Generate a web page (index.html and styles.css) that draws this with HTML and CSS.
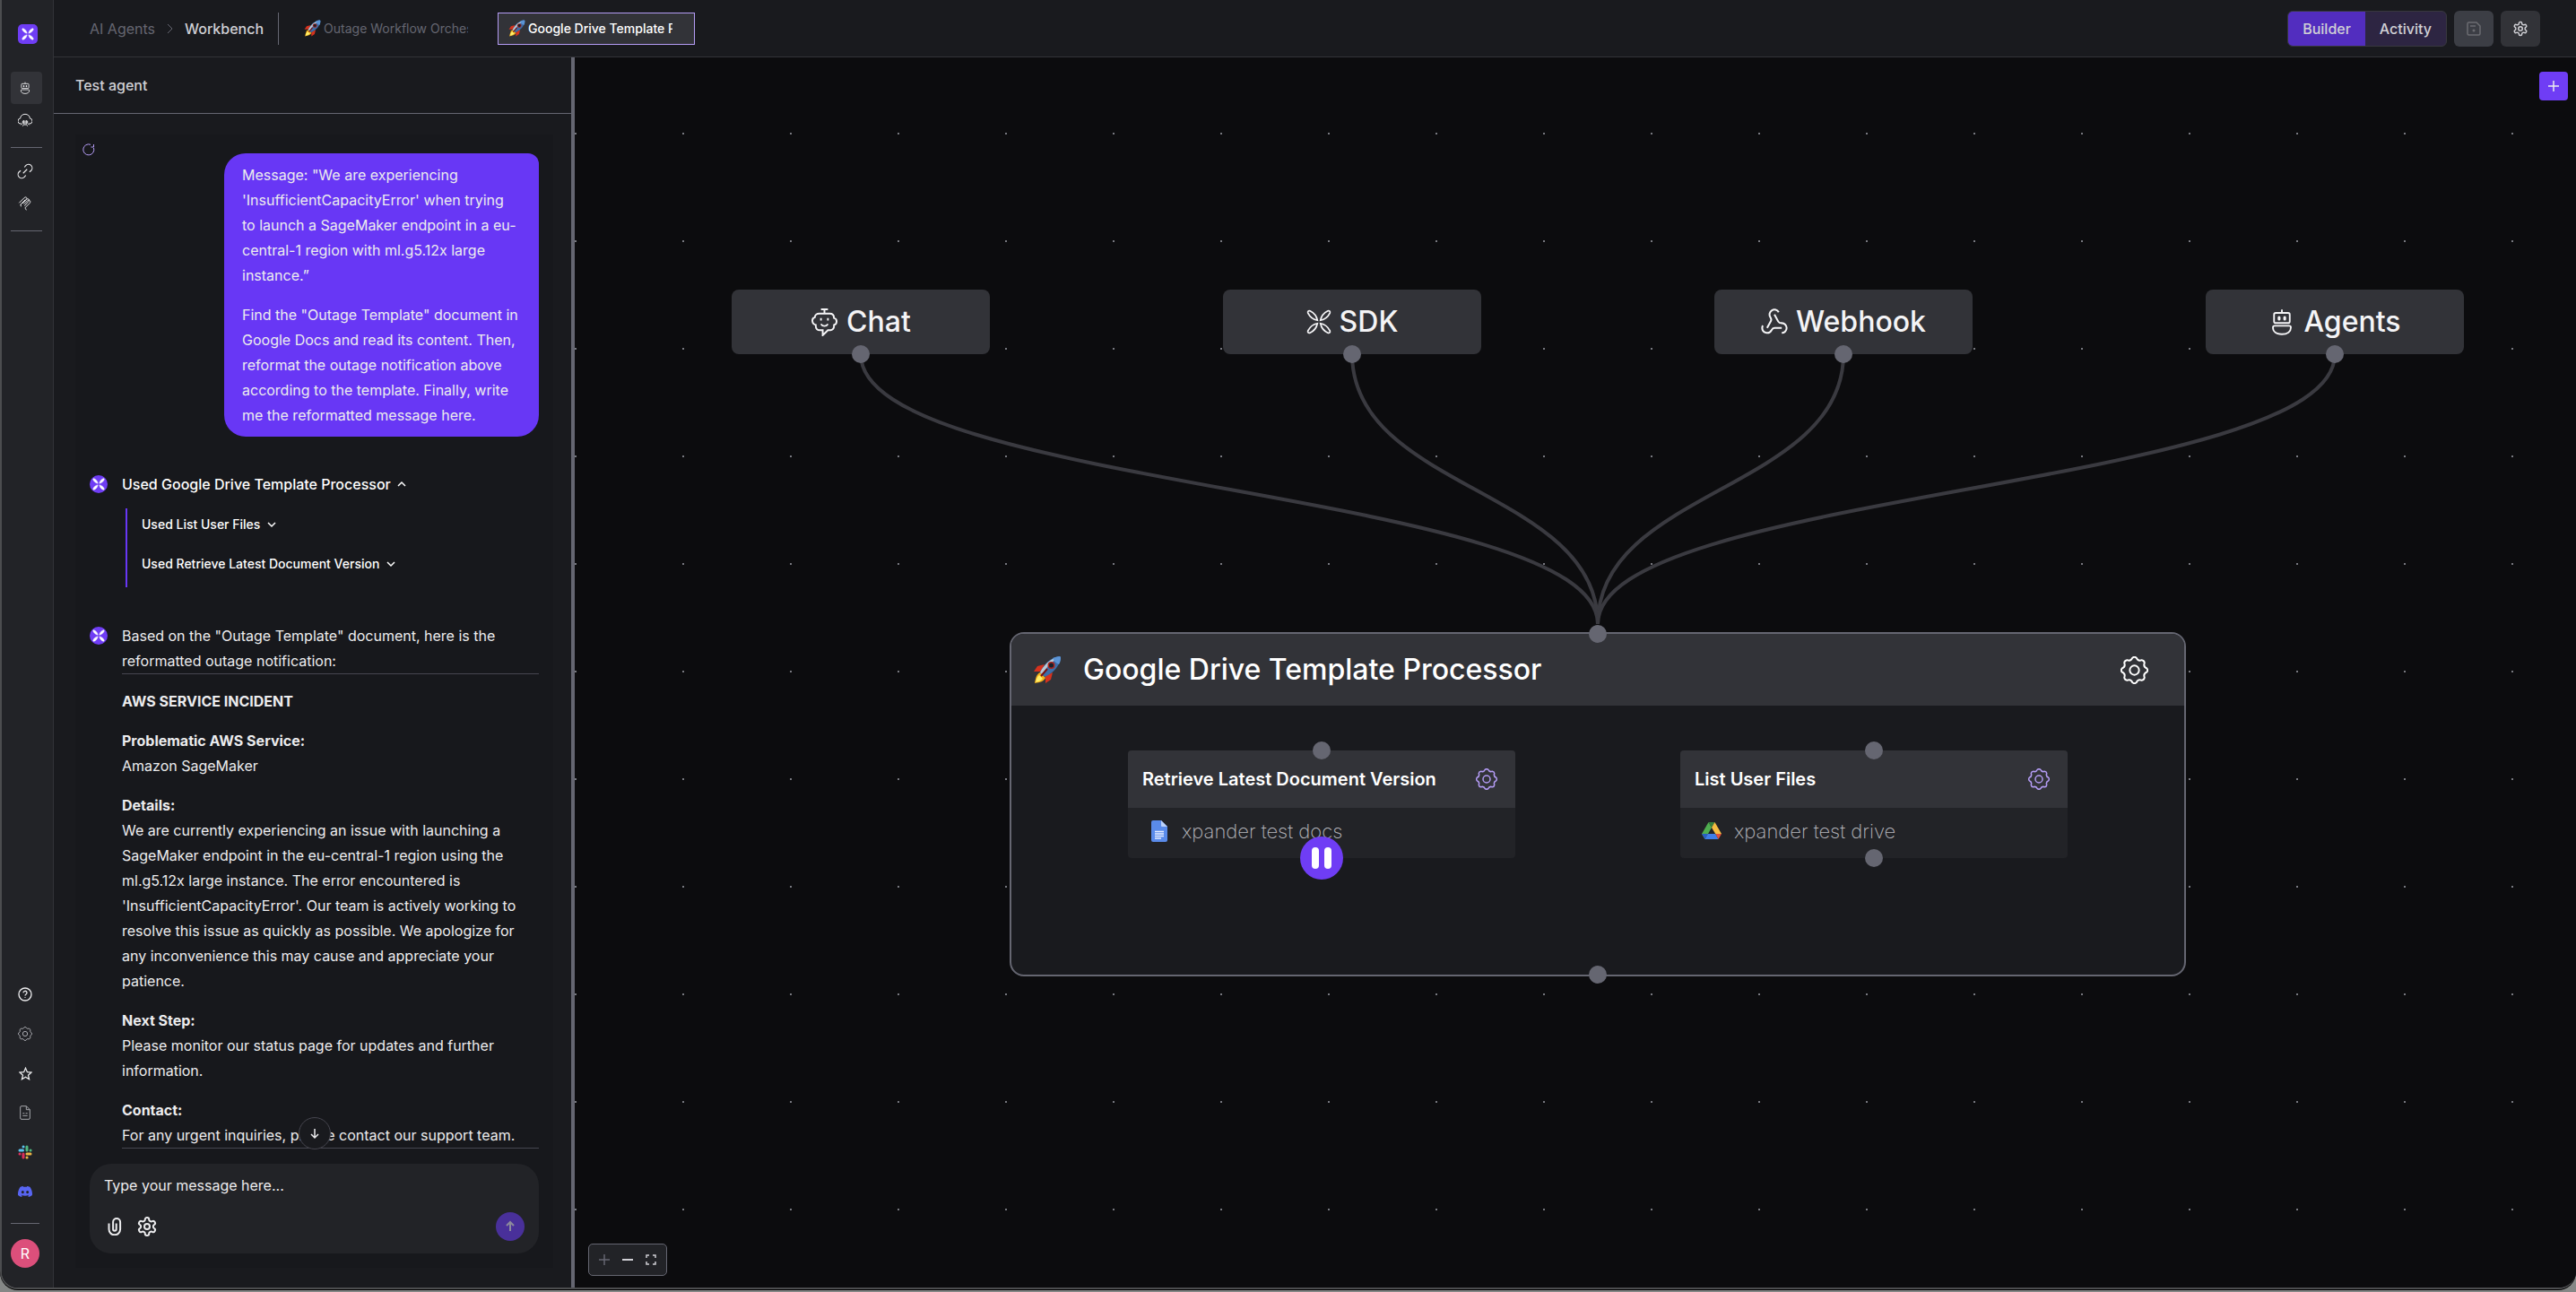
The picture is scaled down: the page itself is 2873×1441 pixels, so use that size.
FILE: index.html
```html
<!DOCTYPE html>
<html lang="en">
<head>
<meta charset="utf-8">
<title>Workbench</title>
<link rel="stylesheet" href="styles.css">
</head>
<body>
<svg class="sprite" aria-hidden="true">
  <symbol id="cog8" viewBox="0 0 24 24"><path d="M10.33 1.33Q12 0 13.69 1.33Q15.06 4.6 18.35 3.26Q20.5 3.5 20.74 5.65Q19.4 8.94 22.67 10.31Q24 12 22.67 13.69Q19.4 15.06 20.74 18.35Q20.5 20.5 18.35 20.74Q15.06 19.4 13.69 22.67Q12 24 10.31 22.67Q8.94 19.4 5.65 20.74Q3.5 20.5 3.26 18.35Q4.6 15.06 1.33 13.69Q0 12 1.33 10.31Q4.6 8.94 3.26 5.65Q3.5 3.5 5.65 3.26Q8.94 4.6 10.33 1.33Z"/><circle cx="12" cy="12" r="4"/></symbol>
  <symbol id="cog6" viewBox="0 0 24 24"><path d="M12.22 2h-.44a2 2 0 0 0-2 2v.18a2 2 0 0 1-1 1.73l-.43.25a2 2 0 0 1-2 0l-.15-.08a2 2 0 0 0-2.73.73l-.22.38a2 2 0 0 0 .73 2.73l.15.1a2 2 0 0 1 1 1.72v.51a2 2 0 0 1-1 1.74l-.15.09a2 2 0 0 0-.73 2.73l.22.38a2 2 0 0 0 2.73.73l.15-.08a2 2 0 0 1 2 0l.43.25a2 2 0 0 1 1 1.73V20a2 2 0 0 0 2 2h.44a2 2 0 0 0 2-2v-.18a2 2 0 0 1 1-1.73l.43-.25a2 2 0 0 1 2 0l.15.08a2 2 0 0 0 2.73-.73l.22-.39a2 2 0 0 0-.73-2.73l-.15-.08a2 2 0 0 1-1-1.74v-.5a2 2 0 0 1 1-1.74l.15-.09a2 2 0 0 0 .73-2.73l-.22-.38a2 2 0 0 0-2.73-.73l-.15.08a2 2 0 0 1-2 0l-.43-.25a2 2 0 0 1-1-1.73V4a2 2 0 0 0-2-2z"/><circle cx="12" cy="12" r="3"/></symbol>
  <symbol id="robot" viewBox="0 0 24 24"><path d="M12 1v3M6.500 4h11a1.500 1.500 0 0 1 1.500 1.500v6a1.500 1.500 0 0 1-1.500 1.500h-11a1.500 1.500 0 0 1-1.500-1.500v-6a1.500 1.500 0 0 1 1.500-1.500zM5.500 15.500h13a1.500 1.500 0 0 1 1.500 1.500c0 3.500-3 6-8 6s-8-2.500-8-6a1.500 1.500 0 0 1 1.500-1.500z"/><path d="M9.500 8v1.500M14.500 8v1.500" stroke-width="2.500" stroke-linecap="round"/></symbol>
  <symbol id="wing" viewBox="0 0 24 24"><path d="M1.500 3.500c-.5-1.500.5-2.500 2-2 3 1.500 6 3.500 7 9-5-1-7.500-4-9-7zM22.500 3.500c.5-1.500-.5-2.500-2-2-3 1.500-6 3.500-7 9 5-1 7.500-4 9-7zM1.500 20.500c-.5 1.500.5 2.500 2 2 3-1.500 6-3.500 7-9-5 1-7.500 4-9 7zM22.500 20.500c.5 1.500-.5 2.500-2 2-3-1.500-6-3.500-7-9 5 1 7.500 4 9 7z"/></symbol>
  <symbol id="rocket" viewBox="0 0 32 32"><path d="M13 10 5 12 1 18l8 0zM22 19l-2 8-6 4 0-8z" fill="#d5321e"/><path d="M8 19c-4 2-5 6-6 12 6-1 10-2 12-6z" fill="#f6b21b"/><path d="M7 22c-3 3-3 5-4 8 4-1 6-2 8-4z" fill="#fff06a"/><path d="M30 1C21 2 13 8 8 19l5 5C24 19 30 11 31 2z" fill="#3d6ea8"/><path d="M27 2C19 4 12 11 8 19l3 3C14 14 20 7 29 3z" fill="#b9cad6"/><path d="M30 1c-3 0-5 1-8 2 1 3 3 5 7 7 2-3 2-6 2-8z" fill="#5b94d6"/><circle cx="20.500" cy="11" r="4" fill="#a9241d"/><circle cx="20.500" cy="11" r="2.500" fill="#16202c"/><path d="M9 23l7-8" stroke="#711" stroke-width="2"/></symbol>
  <symbol id="up" viewBox="0 0 12 12"><path d="M2 8l4-4 4 4"/></symbol>
  <symbol id="down" viewBox="0 0 12 12"><path d="M2 4l4 4 4-4"/></symbol>
</svg>

<div class="window">
  <nav class="rail" aria-label="Main">
    <a class="logo" href="#" aria-label="Home"><svg class="solid" width="14" height="14"><use href="#wing"/></svg></a>
    <a class="rail-item active" href="#" aria-label="Agents"><svg class="icon" width="14" height="14"><use href="#robot"/></svg></a>
    <a class="rail-item" href="#" aria-label="Cloud"><svg class="icon" width="16" height="16" viewBox="0 0 24 24"><path d="M6 18H5a4.500 4.500 0 0 1-1-9c0-4 3.500-7 8-7s8 3 8 7a4.500 4.500 0 0 1-1 9h-1M10 12v7l-2 3M14 12v7l2 3M12 13v8M8 13v4l-3 3M16 13v4l3 3"/></svg></a>
    <hr class="rail-line">
    <a class="rail-item" href="#" aria-label="Connections"><svg class="icon" width="18" height="18" viewBox="0 0 24 24"><path d="M9 15l6-6M11 6l2-2.500a5.300 5.300 0 0 1 8 7.500L18.500 13M13 18l-2 2.500A5.300 5.300 0 0 1 3 13l2.500-2"/></svg></a>
    <a class="rail-item" href="#" aria-label="Toolkits"><svg class="icon" width="16" height="16" viewBox="0 0 24 24"><path d="M2 11l9-9c3-2 5 1 3 3l-7 7M7 12l7-7c3-2 6 0 4 3l-7 8M10 13l6-6c3-2 6 1 4 4l-7 7c-2 2 0 2 1 5M4 14l8-8M6 17c-2-1-2-3 0-4"/></svg></a>
    <hr class="rail-line">
    <div class="rail-foot">
      <a class="rail-link" href="#" aria-label="Help"><svg class="icon" width="16" height="16" viewBox="0 0 24 24"><circle cx="12" cy="12" r="10.500" stroke-width="2"/><path d="M9 9.500a3 3 0 1 1 4.500 2.500c-1 .6-1.500 1-1.500 2.200M12 17v1" stroke-width="2"/></svg></a>
      <a class="rail-link dim" href="#" aria-label="Settings"><svg class="icon" width="16" height="16"><use href="#cog8"/></svg></a>
      <a class="rail-link" href="#" aria-label="Favorites"><svg class="icon" width="15" height="15" viewBox="0 0 24 24"><path d="M12 2l3 7 7.500.7-5.700 5 1.700 7.300L12 18l-6.500 4 1.700-7.300-5.700-5L9 9z" stroke-width="2"/></svg></a>
      <a class="rail-link dim" href="#" aria-label="Documents"><svg class="icon" width="16" height="16" viewBox="0 0 24 24"><path d="M4 3a2 2 0 0 1 2-2h8l6 6v14a2 2 0 0 1-2 2H6a2 2 0 0 1-2-2zM14 1v6h6M8 13h3M13 13h3M8 17h8"/></svg></a>
      <a class="rail-link" href="#" aria-label="Slack"><svg width="16" height="16" viewBox="0 0 16 16"><g stroke-width="3" stroke-linecap="round"><path d="M2 6h3.500M6 2h.1" stroke="#5cc3ee"/><path d="M10 2v4M14 6h.1" stroke="#4fb67f"/><path d="M14 10h-4M10 14h.1" stroke="#ebb445"/><path d="M6 14v-4M2 10h.1" stroke="#dc2f5c"/></g></svg></a>
      <a class="rail-link" href="#" aria-label="Discord"><svg width="16" height="16" viewBox="0 0 24 24"><path fill="#5865f2" fill-rule="evenodd" d="M20.300 4.400A19.800 19.800 0 0 0 15.400 3l-.6 1.200a18 18 0 0 0-5.600 0L8.600 3a19.800 19.800 0 0 0-4.900 1.400C.6 9-.3 13.600.1 18.100A20 20 0 0 0 6.100 21l1.200-2-1.900-.9.4-.3c4 1.800 8.300 1.800 12.300 0l.4.300-1.800.9 1.200 2a20 20 0 0 0 6-3c.5-5.200-.8-9.700-3.600-13.600zM8 15.400c-1.200 0-2.200-1.100-2.200-2.500S6.800 10.400 8 10.400s2.200 1.100 2.200 2.500S9.200 15.400 8 15.400zm8 0c-1.200 0-2.200-1.100-2.200-2.500s1-2.500 2.200-2.500 2.200 1.100 2.200 2.500-1 2.500-2.200 2.500z"/></svg></a>
      <hr class="rail-line">
      <a class="avatar" href="#">R</a>
    </div>
  </nav>

  <div class="main">
    <header class="topbar">
      <div class="crumbs">
        <a class="crumb" href="#">AI Agents</a>
        <svg class="icon crumb-sep" width="7" height="12" viewBox="0 0 7 12"><path d="M1 1l5 5-5 5" stroke-width="1"/></svg>
        <a class="crumb here" href="#">Workbench</a>
      </div>
      <div class="tabs">
        <button class="tab"><svg class="tab-rocket" width="19" height="19"><use href="#rocket"/></svg><span>Outage Workflow Orchestrator</span></button>
        <button class="tab selected"><svg class="tab-rocket" width="19" height="19"><use href="#rocket"/></svg><span>Google Drive Template Processor</span></button>
      </div>
      <div class="actions">
        <div class="toggle"><button class="on">Builder</button><button>Activity</button></div>
        <button class="square muted" aria-label="Save"><svg class="icon" width="16" height="16" viewBox="0 0 16 16"><path d="M2.500 1h8.500l4 4v8.500a1.500 1.500 0 0 1-1.500 1.500h-11A1.500 1.500 0 0 1 1 13.500v-11A1.500 1.500 0 0 1 2.500 1zM4 5h6" stroke-width="1.500"/><circle cx="8" cy="10" r="1.500" fill="currentColor" stroke="none"/></svg></button>
        <button class="square" aria-label="Settings"><svg class="icon" width="18" height="18"><use href="#cog6" stroke-width="2"/></svg></button>
      </div>
    </header>

    <div class="work">
      <section class="panel">
        <h2 class="panel-title">Test agent</h2>
        <div class="panel-body">
          <div class="chat">
            <div class="log">
              <div class="user-row">
                <button class="refresh" aria-label="Restart"><svg class="icon" width="14" height="14" viewBox="0 0 14 14"><path d="M12.500 5A6 6 0 1 1 9 1.300M9.500 4h3V1" stroke-width="1"/></svg></button>
                <div class="bubble">
                  <p>Message: "We are experiencing 'InsufficientCapacityError' when trying to launch a SageMaker endpoint in a eu-central-1 region with ml.g5.12x large instance.”</p>
                  <p>Find the "Outage Template" document in Google Docs and read its content. Then, reformat the outage notification above according to the template. Finally, write me the reformatted message here.</p>
                </div>
              </div>
              <div class="reply">
                <span class="bot"><svg class="solid" width="14" height="14"><use href="#wing"/></svg></span>
                <div class="reply-body">
                  <button class="used">Used Google Drive Template Processor<svg class="icon" width="12" height="12"><use href="#up"/></svg></button>
                  <div class="steps">
                    <button class="step">Used List User Files<svg class="icon" width="12" height="12"><use href="#down"/></svg></button>
                    <button class="step">Used Retrieve Latest Document Version<svg class="icon" width="12" height="12"><use href="#down"/></svg></button>
                  </div>
                </div>
              </div>
              <div class="reply">
                <span class="bot"><svg class="solid" width="14" height="14"><use href="#wing"/></svg></span>
                <div class="reply-body">
                  <p>Based on the "Outage Template" document, here is the reformatted outage notification:</p>
                  <hr>
                  <div class="notice">
                    <p><strong>AWS SERVICE INCIDENT</strong></p>
                    <p><strong>Problematic AWS Service:</strong><br>Amazon SageMaker</p>
                    <p><strong>Details:</strong><br>We are currently experiencing an issue with launching a SageMaker endpoint in the eu-central-1 region using the ml.g5.12x large instance. The error encountered is 'InsufficientCapacityError'. Our team is actively working to resolve this issue as quickly as possible. We apologize for any inconvenience this may cause and appreciate your patience.</p>
                    <p><strong>Next Step:</strong><br>Please monitor our status page for updates and further information.</p>
                    <p><strong>Contact:</strong><br>For any urgent inquiries, please contact our support team.</p>
                  </div>
                  <hr>
                </div>
              </div>
            </div>
            <form class="composer">
              <button type="button" class="to-end" aria-label="Scroll to end"><svg class="icon" width="14" height="14" viewBox="0 0 14 14"><path d="M7 2v10M3 8l4 4 4-4"/></svg></button>
              <textarea rows="1" aria-label="Message" placeholder="Type your message here..."></textarea>
              <div class="composer-tools">
                <button type="button" aria-label="Attach"><svg class="icon" width="20" height="20" viewBox="0 0 20 20"><path d="M3.500 6.500V13a6.300 6.300 0 0 0 12.600 0V5a4 4 0 0 0-8 0v8a1.800 1.800 0 0 0 3.600 0V6.500" stroke-width="2"/></svg></button>
                <button type="button" aria-label="Options"><svg class="icon" width="24" height="24"><use href="#cog6" stroke-width="2"/></svg></button>
                <button type="submit" class="send" aria-label="Send"><svg class="icon" width="16" height="16" viewBox="0 0 16 16"><path d="M8 13V3M4 7l4-4 4 4" stroke-width="2"/></svg></button>
              </div>
            </form>
          </div>
        </div>
      </section>

      <section class="canvas" aria-label="Workflow">
        <svg class="edges" aria-hidden="true">
          <path d="M319 331C319 482 1141 482 1141 632"/>
          <path d="M867 331C867 482 1141 482 1141 632"/>
          <path d="M1415 331C1415 482 1141 482 1141 632"/>
          <path d="M1963 331C1963 482 1141 482 1141 632"/>
        </svg>
        <div class="node source chat-node">
          <svg class="icon" width="31" height="31" viewBox="0 0 32 32"><path d="M16 1v5M12 1h8M10 6h12c3 0 5 2 5 5 4 1 4 7 0 8v2c0 2-2 4-4 4h-3l-6 6v-6h-3c-3 0-5-2-5-5v-1c-5-1-5-8-1-9 0-2 2-4 5-4zM12 11v3M20 11v3M12 18c1.500 3 6.500 3 8 0" stroke-width="2"/></svg>
          <span>Chat</span>
          <i class="port bottom"></i>
        </div>
        <div class="node source sdk-node">
          <svg class="icon" width="28" height="28"><use href="#wing"/></svg>
          <span>SDK</span>
          <i class="port bottom"></i>
        </div>
        <div class="node source webhook-node">
          <svg class="icon" width="30" height="30" viewBox="1 1 22 22"><path d="M18 16.980h-5.990c-1.100 0-1.950.940-2.480 1.900A4 4 0 0 1 2 17c.01-.7.2-1.400.570-2M6 17l3.130-5.780c.530-.970.100-2.180-.5-3.100a4 4 0 1 1 6.890-4.060M12 6l3.130 5.730C15.660 12.700 16.900 13 18 13a4 4 0 0 1 0 8" stroke-width="1.500"/></svg>
          <span>Webhook</span>
          <i class="port bottom"></i>
        </div>
        <div class="node source agents-node">
          <svg class="icon" width="30" height="30"><use href="#robot"/></svg>
          <span>Agents</span>
          <i class="port bottom"></i>
        </div>

        <article class="node agent">
          <i class="port top"></i>
          <header class="agent-head">
            <svg width="32" height="32"><use href="#rocket"/></svg>
            <h3>Google Drive Template Processor</h3>
            <button aria-label="Agent settings"><svg class="icon" width="31" height="31"><use href="#cog8"/></svg></button>
          </header>
          <div class="agent-body">
            <section class="tool">
              <i class="port top"></i>
              <header class="tool-head"><h4>Retrieve Latest Document Version</h4><button aria-label="Tool settings"><svg class="icon" width="24" height="24"><use href="#cog8"/></svg></button></header>
              <div class="tool-row"><svg width="24" height="24" viewBox="0 0 24 24"><path fill="#5a8bea" d="M4 0h9l7 7v15a2 2 0 0 1-2 2H4a2 2 0 0 1-2-2V2a2 2 0 0 1 2-2z"/><path fill="#bcd2fa" d="M13 0l7 7h-6a1 1 0 0 1-1-1z"/><path stroke="#e5edff" stroke-width="1.300" d="M6 12.500h10M6 15h10M6 17.500h10M6 20h7"/></svg><span>xpander test docs</span></div>
              <button class="pause" aria-label="Pause"><svg width="24" height="24" viewBox="0 0 24 24"><rect x="1" width="8" height="24" rx="4" fill="#fff"/><rect x="15" width="8" height="24" rx="4" fill="#fff"/></svg></button>
            </section>
            <section class="tool">
              <i class="port top"></i>
              <header class="tool-head"><h4>List User Files</h4><button aria-label="Tool settings"><svg class="icon" width="24" height="24"><use href="#cog8"/></svg></button></header>
              <div class="tool-row"><svg width="24" height="24" viewBox="0 0 24 24"><path fill="#4fae50" d="M7.500 2L0 15l3.500 6L11 8z"/><path fill="#37803c" d="M7.500 2h7L11 8z"/><path fill="#f6bd42" d="M14.500 2L11 8l4.200 7H22z"/><path fill="#3f7de8" d="M6.800 15L3.500 21h15l-3.300-6z"/><path fill="#2b5ec4" d="M0 15h6.800l-3.300 6z"/><path fill="#e0513c" d="M15.200 15H22l-3.500 6z"/></svg><span>xpander test drive</span></div>
              <i class="port bottom"></i>
            </section>
          </div>
          <i class="port bottom"></i>
        </article>

        <button class="add" aria-label="Add node"><svg class="icon" width="14" height="14" viewBox="0 0 14 14"><path d="M7 1v12M1 7h12"/></svg></button>
        <div class="zoom">
          <button class="off" aria-label="Zoom in"><svg class="icon" width="14" height="14" viewBox="0 0 14 14"><path d="M7 1v12M1 7h12"/></svg></button>
          <button aria-label="Zoom out"><svg class="icon" width="14" height="14" viewBox="0 0 14 14"><path d="M1 7h12" stroke-width="2"/></svg></button>
          <button aria-label="Fit view"><svg class="icon" width="14" height="14" viewBox="0 0 14 14"><path d="M2 5V2h3M9 2h3v3M12 9v3H9M5 12H2V9"/></svg></button>
        </div>
      </section>
    </div>
  </div>
</div>
</body>
</html>
```
FILE: styles.css
```css
* { box-sizing: border-box; margin: 0; }

body {
  height: 100vh;
  padding-bottom: 3px;
  background: #858786;
  color: #ececee;
  font: 16px/28px Inter, "Liberation Sans", sans-serif;
  overflow: hidden;
}

a { color: inherit; text-decoration: none; }

button {
  display: flex;
  align-items: center;
  justify-content: center;
  padding: 0;
  border: 0;
  background: none;
  color: inherit;
  font: inherit;
}

hr { height: 1px; border: 0; background: #46464f; }

.sprite { position: absolute; width: 0; height: 0; }

.icon { flex: none; fill: none; stroke: currentColor; stroke-width: 1.5; }

.solid { flex: none; fill: #fff; stroke: #fff; stroke-width: 1; }

.window {
  display: flex;
  height: 100%;
  border: solid #4c4d4f;
  border-width: 0 0 2px 2px;
  border-radius: 0 0 20px 20px;
  box-shadow: 0 1px #000;
  background: #0c0c0e;
  overflow: hidden;
}

/* Navigation rail */
.rail {
  display: flex;
  flex-direction: column;
  flex: none;
  width: 58px;
  padding: 27px 12px 22px 10px;
  border-right: 1px solid #323338;
  background: #222327;
}

.logo {
  display: flex;
  align-items: center;
  justify-content: center;
  width: 22px;
  height: 22px;
  margin: 0 0 31px 8px;
  border-radius: 5px;
  background: #6f3df5;
}

.rail-item {
  display: flex;
  align-items: center;
  justify-content: center;
  height: 36px;
  padding-right: 3px;
  border-radius: 4px;
}

.rail-item.active { background: #323338; }

.rail-line { flex: none; margin: 12px 0 8px; background: #656671; }

.rail-foot { width: 32px; margin-top: auto; }

.rail-link { display: flex; align-items: center; justify-content: center; height: 44px; }

.rail-link.dim { color: #a4a5aa; }

.rail-foot .rail-line { margin: 13px 0 17px; }

.avatar {
  display: block;
  width: 32px;
  height: 32px;
  border-radius: 50%;
  background: #dc4f7b;
  color: #fff;
  line-height: 32px;
  text-align: center;
}

/* Top bar */
.main { display: flex; flex: 1; flex-direction: column; min-width: 0; }

.topbar {
  display: flex;
  align-items: center;
  flex: none;
  height: 64px;
  padding: 0 40px;
  border-bottom: 1px solid #323338;
  background: #191a1e;
}

.crumbs {
  display: flex;
  align-items: center;
  gap: 13px;
  height: 36px;
  padding-right: 16px;
  border-right: 1px solid #656671;
  color: #656671;
}

.crumb.here { color: #d0d0d5; font-weight: 500; }

.tabs { display: flex; gap: 8px; margin-left: 16px; }

.tab {
  justify-content: flex-start;
  gap: 3px;
  width: 220px;
  height: 36px;
  padding: 0 24px 0 11px;
  border: 1px solid transparent;
  color: #656671;
  font-size: 14px;
}

.tab span { overflow: hidden; white-space: nowrap; }

.tab-rocket { flex: none; }

.tab.selected { border-color: #b49cf5; background: #323338; color: #fff; font-weight: 500; }

.actions { display: flex; gap: 8px; margin-left: auto; color: #d0d0d5; }

.toggle {
  display: flex;
  height: 40px;
  border: 1px solid #38383e;
  border-radius: 6px;
  background: #2d2542;
  font-weight: 500;
  overflow: hidden;
}

.toggle button { padding: 0 16px; }

.toggle .on { background: #522dbf; }

.square { width: 44px; height: 40px; border-radius: 6px; background: #323338; }

.square.muted { background: #3c3e45; color: #6b6c71; }

/* Chat panel */
.work { display: flex; flex: 1; min-height: 0; }

.panel {
  display: flex;
  flex: none;
  flex-direction: column;
  width: 581px;
  border-right: 4px solid #656671;
  background: #191a1e;
}

.panel-title {
  flex: none;
  height: 63px;
  padding-left: 24px;
  border-bottom: 1px solid #656671;
  color: #d0d0d5;
  font-size: 16px;
  font-weight: 500;
  line-height: 62px;
}

.panel-body { flex: 1; min-height: 0; padding: 23px 20px 22px 24px; }

.chat {
  display: flex;
  flex-direction: column;
  height: 100%;
  padding: 0 16px 16px 8px;
  background: #17181c;
}

.log { flex: 1; min-height: 0; padding-top: 10px; overflow: hidden; }

.user-row { display: flex; justify-content: space-between; align-items: flex-start; }

.refresh { color: #b49cf5; }

.bubble {
  width: 351px;
  margin: 11px 0 39px;
  padding: 10px 20px;
  border-radius: 24px 12px 24px 24px;
  background: #6837f5;
}

.bubble p + p, .notice p { margin-top: 16px; }

.reply { display: flex; gap: 16px; margin: 0 0 40px 8px; }

.bot {
  display: flex;
  align-items: center;
  justify-content: center;
  flex: none;
  width: 20px;
  height: 20px;
  margin-top: 4px;
  border-radius: 50%;
  background: #6f3df5;
}

.reply-body { flex: 1; min-width: 0; }

.used { gap: 6px; font-weight: 500; color: #fff; }

.steps {
  display: flex;
  flex-direction: column;
  align-items: flex-start;
  gap: 8px;
  margin: 13px 0 0 4px;
  padding: 0 0 8px 16px;
  border-left: 2px solid #6837f5;
}

.step { gap: 7px; height: 36px; color: #fff; font-size: 14px; font-weight: 500; }

.composer {
  position: relative;
  display: flex;
  flex: none;
  flex-direction: column;
  justify-content: space-between;
  height: 100px;
  margin-left: 8px;
  padding: 10px 16px 14px;
  border-radius: 24px;
  background: #222327;
}

.composer textarea {
  height: 28px;
  padding: 0;
  border: 0;
  outline: 0;
  background: none;
  color: #fff;
  font: inherit;
  resize: none;
}

.composer textarea::placeholder { color: #ececee; opacity: 1; }

.composer-tools { display: flex; align-items: center; gap: 14px; padding-left: 2px; }

.send {
  width: 32px;
  height: 32px;
  margin-left: auto;
  border-radius: 50%;
  background: #49309a;
  color: #8c8a9c;
}

.to-end {
  position: absolute;
  bottom: 116px;
  left: calc(50% - 18px);
  width: 36px;
  height: 36px;
  border: 1px solid #46464f;
  border-radius: 50%;
  background: #191a1e;
}

/* Workflow canvas */
.canvas {
  position: relative;
  flex: 1;
  min-width: 0;
  background: #0c0c0e radial-gradient(circle, #77787f 1px, transparent 1px) -59px 25px / 120px 120px;
  overflow: hidden;
}

.edges { position: absolute; inset: 0; width: 100%; height: 100%; fill: none; stroke: #3a3a40; stroke-width: 4; }

.node { position: absolute; }

.port {
  position: absolute;
  left: 50%;
  width: 20px;
  height: 20px;
  margin-left: -10px;
  border-radius: 50%;
  background: #656671;
}

.port.top { top: -10px; }

.port.bottom { bottom: -10px; }

.source {
  top: 259px;
  display: flex;
  align-items: center;
  justify-content: center;
  gap: 9px;
  width: 288px;
  height: 72px;
  border-radius: 8px;
  background: #323338;
  color: #f4f4f6;
  font-size: 32px;
  font-weight: 500;
}

.chat-node { left: 175px; }
.sdk-node { left: 723px; }
.webhook-node { left: 1271px; }
.agents-node { left: 1819px; }

.agent {
  top: 641px;
  left: 485px;
  width: 1312px;
  height: 384px;
  border: 2px solid #656671;
  border-radius: 16px;
  background: #191a1e;
}

.agent-head {
  display: flex;
  align-items: center;
  gap: 24px;
  height: 80px;
  padding: 0 40px 0 24px;
  border-radius: 14px 14px 0 0;
  background: #323338;
  color: #fff;
}

.agent-head h3 { flex: 1; font-size: 32px; font-weight: 500; line-height: 40px; }

.agent-body { display: flex; justify-content: center; gap: 184px; padding-top: 50px; }

.tool { position: relative; width: 432px; height: 120px; border-radius: 4px; background: #222327; }

.tool-head {
  display: flex;
  align-items: center;
  justify-content: space-between;
  height: 64px;
  padding: 0 20px 0 16px;
  border-radius: 4px 4px 0 0;
  background: #323338;
}

.tool-head h4 { color: #fff; font-size: 20px; font-weight: 600; }

.tool-head button { color: #b49cf5; }

.tool-row {
  display: flex;
  align-items: center;
  gap: 12px;
  height: 52px;
  padding-left: 24px;
  color: #b6b6bc;
  font-size: 22px;
  font-weight: 200;
}

.pause {
  position: absolute;
  bottom: -24px;
  left: calc(50% - 24px);
  width: 48px;
  height: 48px;
  border-radius: 50%;
  background: #6f3df5;
}

.add {
  position: absolute;
  top: 16px;
  right: 9px;
  width: 32px;
  height: 32px;
  border-radius: 4px;
  background: #6f3df5;
}

.zoom {
  position: absolute;
  bottom: 13px;
  left: 15px;
  display: flex;
  align-items: center;
  gap: 12px;
  height: 36px;
  padding: 0 10px;
  border: 1px solid #656671;
  border-radius: 5px;
  background: #222327;
  color: #d0d0d5;
}

.zoom .off { color: #656671; }
```
